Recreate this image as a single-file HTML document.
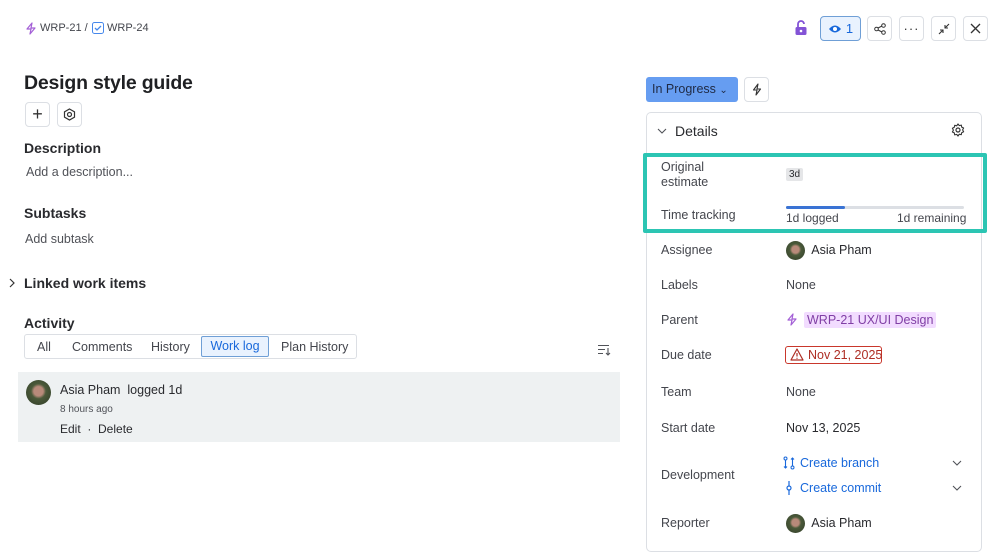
<!DOCTYPE html>
<html><head><meta charset="utf-8"><style>
*{box-sizing:border-box;margin:0;padding:0}
body{width:999px;height:535px;overflow:hidden;background:#fff;font-family:"Liberation Sans",sans-serif;color:#292a2e;position:relative}
.a{position:absolute;white-space:nowrap}
.btn{position:absolute;border:1px solid #dcdfe4;border-radius:4px;background:#fff;display:flex;align-items:center;justify-content:center}
.lbl{position:absolute;left:661px;font-size:12.5px;color:#44464d}
.val{position:absolute;left:786px;font-size:12.5px;color:#44464d}
.av{width:19px;height:19px;border-radius:50%;background:radial-gradient(circle at 50% 45%,#b88a7a 0 25%,#4b5a3a 40%,#2e3a26 100%);display:inline-block;vertical-align:middle}
</style></head><body>
<svg class="a" style="left:25px;top:22px" width="12" height="13" viewBox="0 0 12 13"><path d="M7 1L2 7h4l-1 5 5-6H6z" fill="none" stroke="#a35fd6" stroke-width="1.2" stroke-linejoin="round"/></svg>
<div class="a" style="left:40px;top:22px;font-size:11px;color:#44464d">WRP-21 /</div>
<svg class="a" style="left:92px;top:22px" width="12" height="12"><rect x=".5" y=".5" width="11" height="11" rx="2" fill="none" stroke="#4688ec"/><path d="M3 6l2 2 4-4" fill="none" stroke="#4688ec" stroke-width="1.3"/></svg>
<div class="a" style="left:107px;top:22px;font-size:11px;color:#44464d">WRP-24</div>
<svg class="a" style="left:794px;top:20px" width="14" height="16"><path d="M4 7V4a3 3 0 0 1 6 0" fill="none" stroke="#8353d6" stroke-width="1.8"/><rect x="1.5" y="7" width="11" height="8" rx="1.5" fill="#8353d6"/><circle cx="7" cy="11" r="1.3" fill="#fff"/></svg>
<div class="btn" style="left:820px;top:16px;width:41px;height:25px;background:#e9f2fe;border-color:#6f9fd6;color:#1868db;font-size:13px;gap:4px"><svg width="14" height="10"><path d="M1 5Q7-2 13 5Q7 12 1 5z" fill="#1868db"/><circle cx="7" cy="5" r="2" fill="#fff"/></svg>1</div>
<div class="btn" style="left:867px;top:16px;width:25px;height:25px"><svg width="12" height="12"><circle cx="9.5" cy="2.5" r="1.8" fill="none" stroke="#333"/><circle cx="2.5" cy="6" r="1.8" fill="none" stroke="#333"/><circle cx="9.5" cy="9.5" r="1.8" fill="none" stroke="#333"/><path d="M4 5l4-2M4 7l4 2" stroke="#333"/></svg></div>
<div class="btn" style="left:899px;top:16px;width:25px;height:25px;font-size:13px;letter-spacing:1px;color:#333">···</div>
<div class="btn" style="left:931px;top:16px;width:25px;height:25px"><svg width="12" height="12"><path d="M11 1L7 5M7 2v3h3M1 11l4-4M5 10V7H2" fill="none" stroke="#333" stroke-width="1.1"/></svg></div>
<div class="btn" style="left:963px;top:16px;width:25px;height:25px"><svg width="11" height="11"><path d="M1 1l9 9M10 1l-9 9" stroke="#333" stroke-width="1.3"/></svg></div>
<div class="a" style="left:24px;top:72px;font-size:19.5px;font-weight:bold;color:#1f2023;letter-spacing:-0.2px">Design style guide</div>
<div class="btn" style="left:25px;top:102px;width:25px;height:25px;font-size:18px;color:#333;font-weight:300">+</div>
<div class="btn" style="left:57px;top:102px;width:25px;height:25px"><svg width="13" height="13"><path d="M6.5 1l5 2.8v5.4l-5 2.8-5-2.8V3.8z" fill="none" stroke="#333" stroke-width="1.2"/><circle cx="6.5" cy="6.5" r="2" fill="none" stroke="#333" stroke-width="1.2"/></svg></div>
<div class="a" style="left:24px;top:140px;font-size:14px;font-weight:bold">Description</div>
<div class="a" style="left:26px;top:165px;font-size:12.5px;color:#505258">Add a description...</div>
<div class="a" style="left:24px;top:205px;font-size:14px;font-weight:bold">Subtasks</div>
<div class="a" style="left:25px;top:232px;font-size:12.5px;color:#505258">Add subtask</div>
<svg class="a" style="left:8px;top:278px" width="8" height="10"><path d="M2 1l4 4-4 4" fill="none" stroke="#333" stroke-width="1.2"/></svg>
<div class="a" style="left:24px;top:275px;font-size:14px;font-weight:bold">Linked work items</div>
<div class="a" style="left:24px;top:315px;font-size:14px;font-weight:bold">Activity</div>
<div class="a" style="left:24px;top:334px;width:333px;height:25px;border:1px solid #dcdfe4;border-radius:3px"></div>
<div class="a" style="left:37px;top:340px;font-size:12.5px;color:#44464d">All</div>
<div class="a" style="left:72px;top:340px;font-size:12.5px;color:#44464d">Comments</div>
<div class="a" style="left:151px;top:340px;font-size:12.5px;color:#44464d">History</div>
<div class="a" style="left:201px;top:336px;width:68px;height:21px;border:1px solid #6f9fd6;background:#e9f2fe;border-radius:2px;font-size:12.5px;color:#1868db;text-align:center;line-height:19px">Work log</div>
<div class="a" style="left:281px;top:340px;font-size:12.5px;color:#44464d">Plan History</div>
<svg class="a" style="left:597px;top:344px" width="14" height="12"><path d="M1 1.5h11M1 5.5h7M1 9.5h5M11 4v7M9 9l2 2 2-2" fill="none" stroke="#505258" stroke-width="1.1"/></svg>
<div class="a" style="left:18px;top:372px;width:602px;height:70px;background:#eef1f2"></div>
<span class="a av" style="left:26px;top:380px;width:25px;height:25px"></span>
<div class="a" style="left:60px;top:383px;font-size:12.5px;color:#292a2e">Asia Pham&nbsp; logged 1d</div>
<div class="a" style="left:60px;top:404px;font-size:10px;color:#505258">8 hours ago</div>
<div class="a" style="left:60px;top:422px;font-size:12px;color:#292a2e">Edit &nbsp;·&nbsp; Delete</div>
<div class="a" style="left:646px;top:77px;width:92px;height:25px;background:#669df1;border-radius:3px;font-size:12.5px;color:#1f2a44;line-height:25px;padding-left:6px">In Progress <span style="font-size:10px">&#8964;</span></div>
<div class="btn" style="left:744px;top:77px;width:25px;height:25px"><svg width="10" height="13"><path d="M6 1L1.5 7h3.5l-1 5L8.5 6H5z" fill="none" stroke="#333" stroke-width="1.1" stroke-linejoin="round"/></svg></div>
<div class="a" style="left:646px;top:112px;width:336px;height:440px;border:1px solid #dcdfe4;border-radius:5px"></div>
<svg class="a" style="left:657px;top:128px" width="10" height="7"><path d="M1 1l4 4 4-4" fill="none" stroke="#505258" stroke-width="1.1"/></svg>
<div class="a" style="left:675px;top:123px;font-size:14px;color:#292a2e">Details</div>
<svg class="a" style="left:951px;top:123px" width="14" height="14" viewBox="0 0 14 14"><circle cx="7" cy="7" r="2" fill="none" stroke="#333" stroke-width="1.2"/><path d="M7 1l1.3 1.6 2-.5.4 2 1.9.9-1 1.9 1 1.9-1.9.9-.4 2-2-.5L7 13l-1.3-1.6-2 .5-.4-2-1.9-.9 1-1.9-1-1.9 1.9-.9.4-2 2 .5z" fill="none" stroke="#333" stroke-width="1.1" stroke-linejoin="round"/></svg>
<div class="a" style="left:643px;top:153px;width:344px;height:80px;border:4px solid #2cc5b3;border-radius:2px"></div>
<div class="lbl" style="top:160px;line-height:15px">Original<br>estimate</div>
<div class="a" style="left:786px;top:168px;background:#e5e6e8;border-radius:2px;font-size:10px;padding:1px 3px;color:#292a2e">3d</div>
<div class="lbl" style="top:208px">Time tracking</div>
<div class="a" style="left:786px;top:206px;width:178px;height:3px;background:#dcdfe4;border-radius:2px"></div>
<div class="a" style="left:786px;top:206px;width:59px;height:3px;background:#3a73d4;border-radius:2px"></div>
<div class="val" style="top:211px;font-size:12px">1d logged</div>
<div class="a" style="left:897px;top:211px;font-size:12px;color:#44464d">1d remaining</div>
<div class="lbl" style="top:243px">Assignee</div>
<div class="val" style="top:241px;color:#292a2e"><span class="av"></span>&nbsp; Asia Pham</div>
<div class="lbl" style="top:278px">Labels</div>
<div class="val" style="top:278px">None</div>
<div class="lbl" style="top:313px">Parent</div>
<svg class="a" style="left:786px;top:313px" width="12" height="13"><path d="M7 1L2 7h4l-1 5 5-6H6z" fill="none" stroke="#a35fd6" stroke-width="1.2" stroke-linejoin="round"/></svg>
<div class="a" style="left:804px;top:312px;background:#f2dcff;border-radius:2px;font-size:12.5px;color:#803fa5;padding:1px 3px">WRP-21 UX/UI Design</div>
<div class="lbl" style="top:348px">Due date</div>
<div class="a" style="left:785px;top:346px;width:97px;height:18px;border:1px solid #c9372c;border-radius:3px;font-size:12.5px;color:#ae2e24;line-height:16px;padding-left:22px">Nov 21, 2025</div>
<svg class="a" style="left:790px;top:348px" width="14" height="13"><path d="M7 1L13 12H1z" fill="none" stroke="#ae2e24" stroke-width="1.2" stroke-linejoin="round"/><path d="M7 5v3.5M7 9.8v1" stroke="#ae2e24" stroke-width="1.2"/></svg>
<div class="lbl" style="top:385px">Team</div>
<div class="val" style="top:385px">None</div>
<div class="lbl" style="top:421px">Start date</div>
<div class="val" style="top:421px;color:#292a2e">Nov 13, 2025</div>
<div class="lbl" style="top:468px">Development</div>
<svg class="a" style="left:783px;top:456px" width="12" height="14"><circle cx="2.5" cy="2.5" r="1.5" fill="none" stroke="#1868db"/><circle cx="9.5" cy="11.5" r="1.5" fill="none" stroke="#1868db"/><path d="M2.5 4v8M9.5 10V2M8 3.5l1.5-1.5 1.5 1.5M1 10.5l1.5 1.5 1.5-1.5" fill="none" stroke="#1868db" stroke-width="1.1"/></svg>
<div class="a" style="left:800px;top:456px;font-size:12.5px;color:#1868db">Create branch</div>
<svg class="a" style="left:783px;top:481px" width="12" height="14"><circle cx="6" cy="7" r="2" fill="none" stroke="#1868db" stroke-width="1.2"/><path d="M6 0v5M6 9v5" stroke="#1868db" stroke-width="1.2"/></svg>
<div class="a" style="left:800px;top:481px;font-size:12.5px;color:#1868db">Create commit</div>
<svg class="a" style="left:952px;top:460px" width="10" height="7"><path d="M1 1l4 4 4-4" fill="none" stroke="#505258" stroke-width="1.1"/></svg>
<svg class="a" style="left:952px;top:485px" width="10" height="7"><path d="M1 1l4 4 4-4" fill="none" stroke="#505258" stroke-width="1.1"/></svg>
<div class="lbl" style="top:516px">Reporter</div>
<div class="val" style="top:514px;color:#292a2e"><span class="av"></span>&nbsp; Asia Pham</div>
</body></html>
